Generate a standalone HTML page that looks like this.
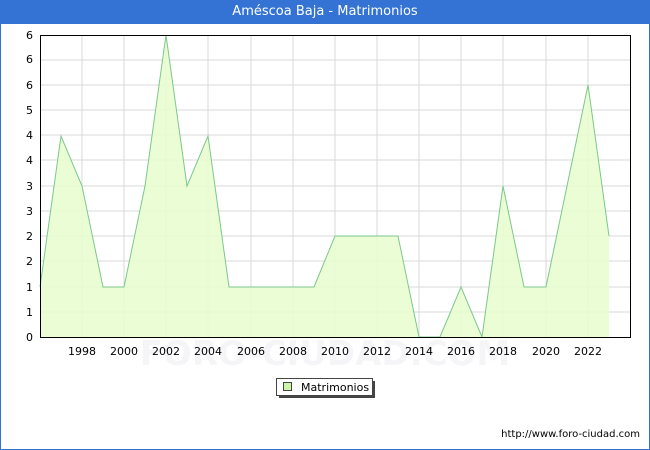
<!DOCTYPE html>
<html><head><meta charset="utf-8"><style>
body{margin:0;width:650px;height:450px;background:#fff;font-family:"DejaVu Sans","Liberation Sans",sans-serif;overflow:hidden}
.frame{position:absolute;left:0;top:0;width:648px;height:448px;border:1px solid #3473d4}
.hdr{position:absolute;left:0;top:0;width:650px;height:24px;background:#3473d4;color:#fff;font-size:13px;text-align:center;line-height:24px}
</style></head><body>
<div class="frame"></div>
<div class="hdr">Améscoa Baja - Matrimonios</div>
<svg width="650" height="450" style="position:absolute;left:0;top:0" font-family="DejaVu Sans, Liberation Sans, sans-serif" font-size="11">
<text x="325" y="365" font-size="34" fill="#f5f5f8" text-anchor="middle" font-weight="bold">FORO-CIUDAD.COM</text>
<g stroke="#d8d8d8" stroke-width="1">
<line x1="40" x2="630" y1="312" y2="312"/><line x1="40" x2="630" y1="287" y2="287"/><line x1="40" x2="630" y1="261" y2="261"/><line x1="40" x2="630" y1="236" y2="236"/><line x1="40" x2="630" y1="211" y2="211"/><line x1="40" x2="630" y1="186" y2="186"/><line x1="40" x2="630" y1="160" y2="160"/><line x1="40" x2="630" y1="135" y2="135"/><line x1="40" x2="630" y1="110" y2="110"/><line x1="40" x2="630" y1="85" y2="85"/><line x1="40" x2="630" y1="60" y2="60"/>
<line x1="82" x2="82" y1="35" y2="337"/><line x1="124" x2="124" y1="35" y2="337"/><line x1="166" x2="166" y1="35" y2="337"/><line x1="208" x2="208" y1="35" y2="337"/><line x1="251" x2="251" y1="35" y2="337"/><line x1="293" x2="293" y1="35" y2="337"/><line x1="335" x2="335" y1="35" y2="337"/><line x1="377" x2="377" y1="35" y2="337"/><line x1="419" x2="419" y1="35" y2="337"/><line x1="461" x2="461" y1="35" y2="337"/><line x1="503" x2="503" y1="35" y2="337"/><line x1="546" x2="546" y1="35" y2="337"/><line x1="588" x2="588" y1="35" y2="337"/>
</g>
<polygon fill="#e8fdd0" fill-opacity="0.9" points="40,337 40,287 61,136 82,186 103,287 124,287 145,186 166,35 187,186 208,136 229,287 251,287 272,287 293,287 314,287 335,236 356,236 377,236 398,236 419,337 440,337 461,287 482,337 503,186 524,287 546,287 567,186 588,85 609,236 609,337"/>
<polyline fill="none" stroke="#7cc88c" stroke-width="1" points="40,287 61,136 82,186 103,287 124,287 145,186 166,35 187,186 208,136 229,287 251,287 272,287 293,287 314,287 335,236 356,236 377,236 398,236 419,337 440,337 461,287 482,337 503,186 524,287 546,287 567,186 588,85 609,236"/>
<rect x="40.5" y="35.5" width="590" height="302" fill="none" stroke="#000"/>
<g text-anchor="end" fill="#000">
<text x="33" y="341">0</text><text x="33" y="316">1</text><text x="33" y="291">1</text><text x="33" y="265">2</text><text x="33" y="240">2</text><text x="33" y="215">3</text><text x="33" y="190">3</text><text x="33" y="164">4</text><text x="33" y="139">4</text><text x="33" y="114">5</text><text x="33" y="89">6</text><text x="33" y="63">6</text><text x="33" y="39">6</text>
</g>
<g text-anchor="middle">
<text x="82" y="355">1998</text><text x="124" y="355">2000</text><text x="166" y="355">2002</text><text x="208" y="355">2004</text><text x="251" y="355">2006</text><text x="293" y="355">2008</text><text x="335" y="355">2010</text><text x="377" y="355">2012</text><text x="419" y="355">2014</text><text x="461" y="355">2016</text><text x="503" y="355">2018</text><text x="546" y="355">2020</text><text x="588" y="355">2022</text>
</g>
<rect x="279" y="381" width="96" height="17" fill="#444"/>
<rect x="276.5" y="378.5" width="96" height="17" fill="#fff" stroke="#444"/>
<rect x="283.5" y="382.5" width="8" height="8" fill="#ccf5a8" stroke="#444"/>
<text x="301" y="391">Matrimonios</text>
<text x="640" y="437" text-anchor="end" font-size="10">http://www.foro-ciudad.com</text>
</svg>
</body></html>
